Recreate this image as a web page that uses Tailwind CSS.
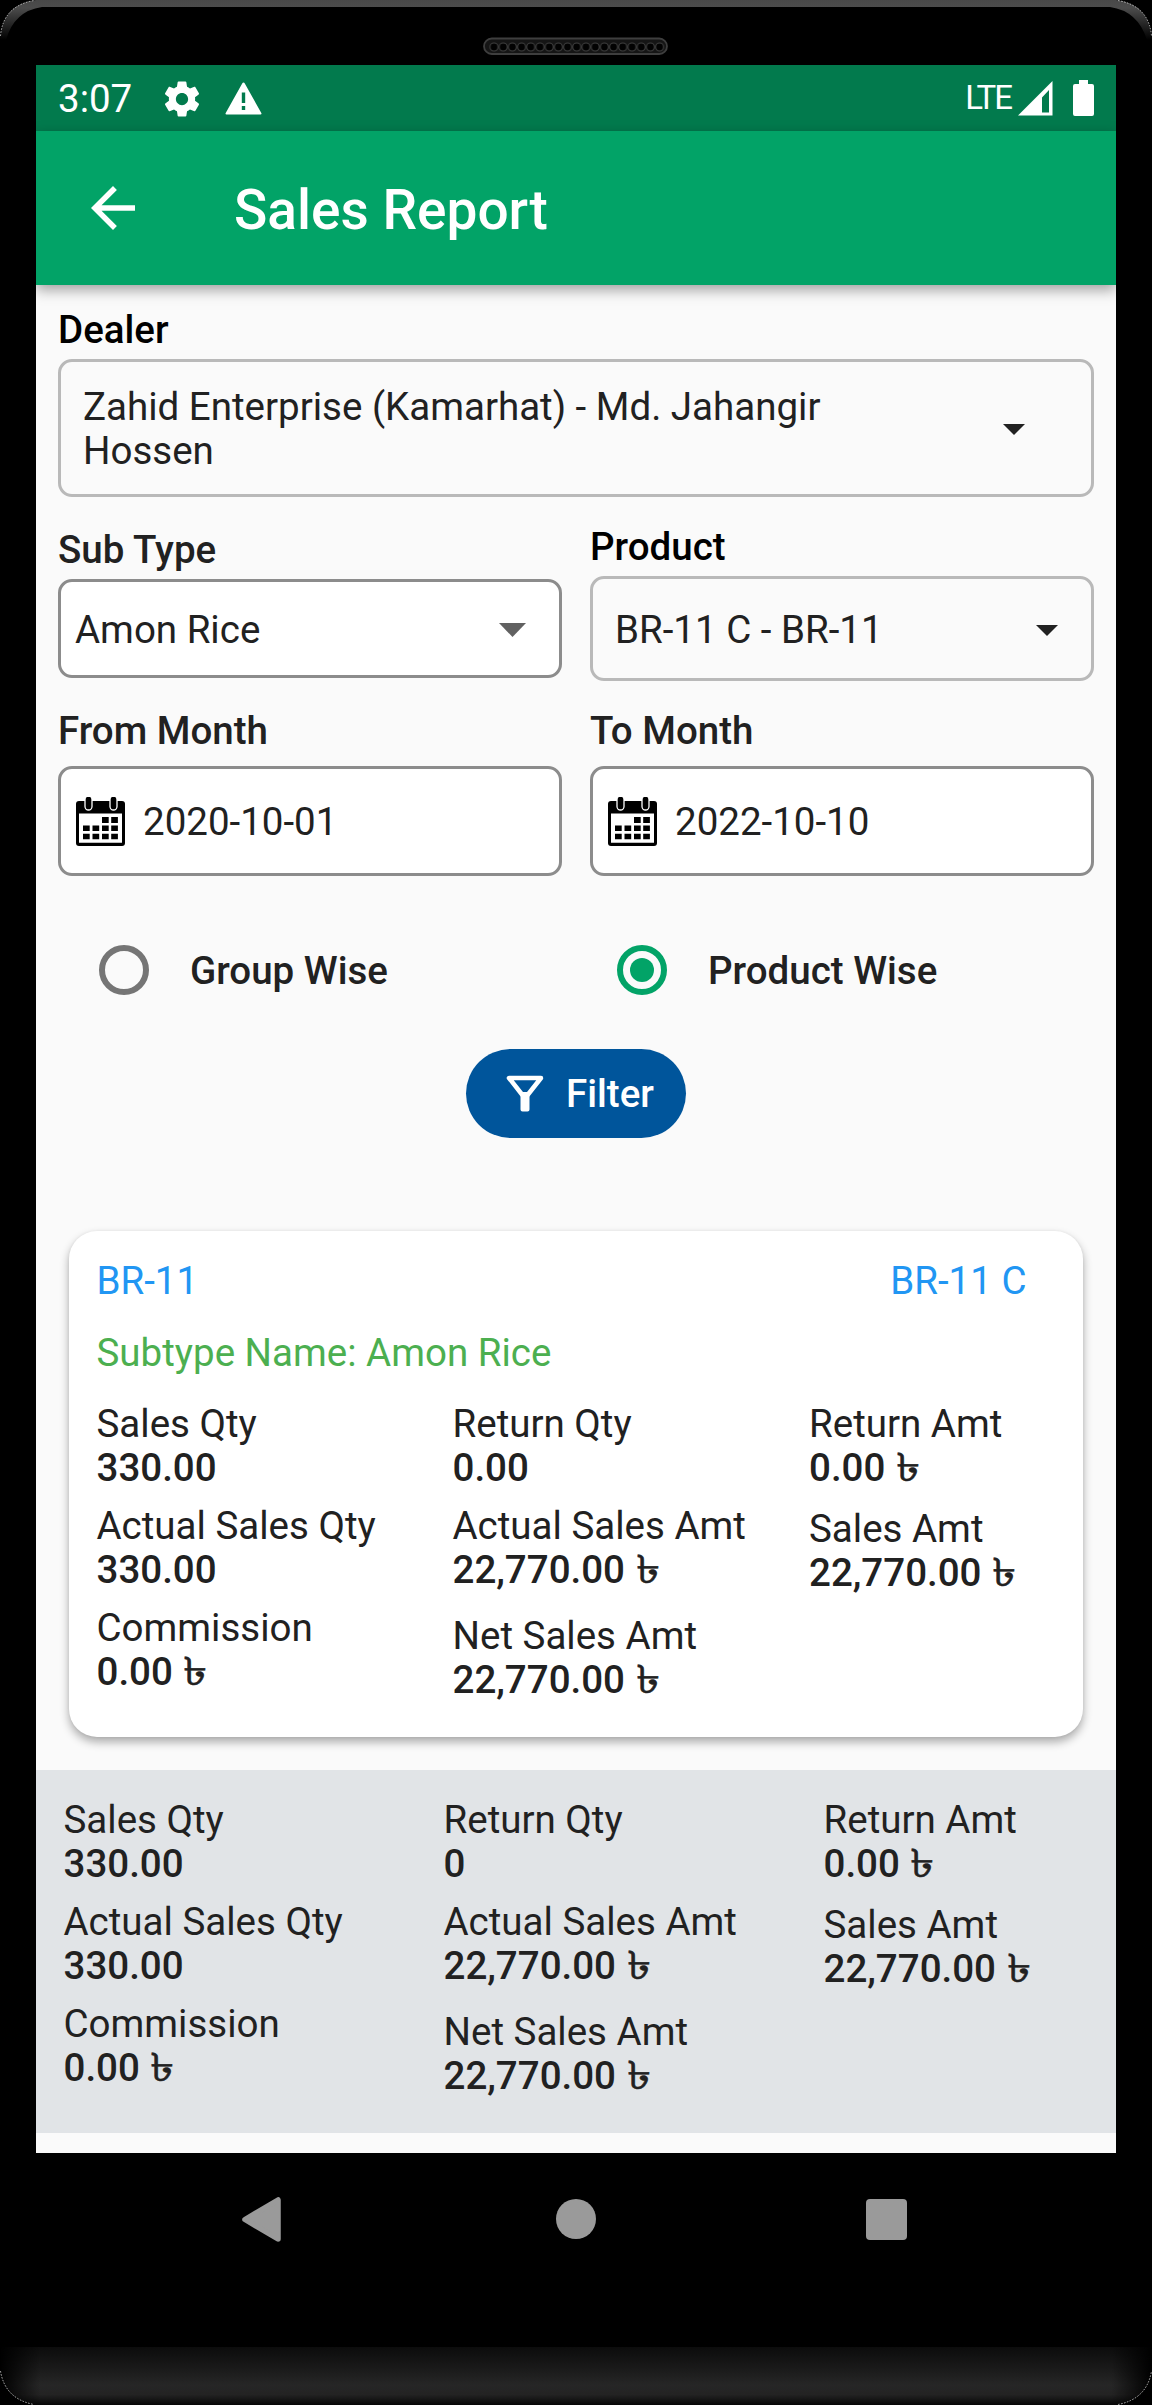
<!DOCTYPE html>
<html lang="en">
<head>
<meta charset="utf-8">
<title>Sales Report</title>
<script src="https://cdn.jsdelivr.net/npm/@tailwindcss/browser@4"></script>
</head>
<body class="bg-black">
<div class="relative flex h-[2405px] w-[1152px] flex-col overflow-hidden bg-black font-[Roboto,sans-serif] text-[38.5px] leading-[44px] text-[#212121]">

  <!-- device frame -->
  <svg class="absolute inset-0" width="1152" height="2405" viewBox="0 0 1152 2405" fill="none">
    <defs>
      <linearGradient id="topEdge" x1="0" y1="0" x2="0" y2="40" gradientUnits="userSpaceOnUse"><stop stop-color="#484848"/><stop offset=".2" stop-color="#4c4c4c"/><stop offset="1" stop-color="#000"/></linearGradient>
      <linearGradient id="bottomEdge" x1="0" y1="2347" x2="0" y2="2405" gradientUnits="userSpaceOnUse"><stop stop-color="#0c0c0c"/><stop offset=".35" stop-color="#191919"/><stop offset=".65" stop-color="#262626"/><stop offset=".82" stop-color="#232323"/><stop offset="1" stop-color="#060606"/></linearGradient>
      <linearGradient id="sideFade" x1="0" y1="0" x2="1152" y2="0" gradientUnits="userSpaceOnUse"><stop stop-color="#000"/><stop offset=".035" stop-color="#000" stop-opacity="0"/><stop offset=".965" stop-color="#000" stop-opacity="0"/><stop offset="1" stop-color="#000"/></linearGradient>
      <pattern id="holes" x="489.4" y="0" width="9.2" height="92" patternUnits="userSpaceOnUse"><circle cx="4.6" cy="47" r="4" fill="#020202" stroke="#3d3d3d" stroke-width="1.1"/></pattern>
    </defs>
    <path d="M0 40Q2 4 36 0H1116Q1150 4 1152 40H1147Q1138 11 1110 7H42Q14 11 6 40Z" fill="url(#topEdge)"/>
    <path d="M0 2347H1152V2371Q1147 2399 1118 2405H34Q5 2399 0 2371Z" fill="url(#bottomEdge)"/>
    <path d="M0 2347H1152V2371Q1147 2399 1118 2405H34Q5 2399 0 2371Z" fill="url(#sideFade)"/>
    <path d="M.5 36Q3 6 34 .5M1118 .5Q1149 6 1151.500 36M.5 2371Q5 2399 34 2404.500M1118 2404.500Q1147 2399 1151.500 2371" stroke="#ddd" stroke-width=".8" stroke-dasharray="1.500 1.500"/>
    <rect x="484" y="38.500" width="183" height="15.500" rx="7.750" fill="#151515" stroke="#3e3e3e" stroke-width="1.800"/>
    <rect x="489.400" y="40" width="174.800" height="13" fill="url(#holes)"/>
  </svg>

  <main class="relative mx-9 mt-[65px] flex h-[2088px] flex-col overflow-hidden bg-[#fafafa]">
    <!-- status bar -->
    <div class="relative z-10 flex h-[66px] shrink-0 items-center bg-[#027a4d] pl-[22px] pr-[22px] text-white">
      <span class="w-[102px] pt-0.5 text-[38.5px]">3:07</span>
      <svg class="ml-px mt-px h-[42px] w-[42px]" viewBox="0 0 24 24" fill="currentColor"><path d="M19.430 12.980c.04-.320.070-.640.070-.980s-.030-.660-.070-.980l2.110-1.650c.190-.150.240-.420.120-.640l-2-3.460c-.120-.220-.390-.300-.610-.220l-2.490 1c-.520-.400-1.080-.730-1.690-.980l-.380-2.650C14.460 2.180 14.250 2 14 2h-4c-.250 0-.460.180-.490.420l-.380 2.650c-.610.250-1.170.590-1.690.980l-2.490-1c-.230-.090-.490 0-.610.220l-2 3.460c-.130.220-.070.490.120.640l2.110 1.650c-.040.320-.070.650-.070.980s.030.660.070.980l-2.110 1.650c-.190.150-.240.420-.120.640l2 3.460c.120.220.390.300.610.220l2.490-1c.520.400 1.080.730 1.690.980l.380 2.650c.030.240.240.420.490.420h4c.250 0 .460-.180.490-.420l.380-2.650c.610-.250 1.170-.590 1.690-.980l2.490 1c.230.090.490 0 .610-.220l2-3.460c.120-.220.070-.490-.120-.640l-2.110-1.650zM12 15.500c-1.930 0-3.500-1.570-3.500-3.500s1.570-3.500 3.500-3.500 3.500 1.570 3.500 3.500-1.570 3.500-3.500 3.500z"/></svg>
      <svg class="ml-[22px] h-[33px] w-[37px]" viewBox="0 0 37 33" fill="currentColor"><path fill-rule="evenodd" d="M18.500.500Q19.300.500 19.800 1.400L36.300 31Q37 32.500 35.500 32.500H1.500Q0 32.500 .700 31L17.200 1.400Q17.700.500 18.500.500ZM16.800 10.500V21H20.200V10.500ZM16.800 24V28H20.200V24Z"/></svg>
      <span class="ml-auto text-[33px] tracking-[-2px]">LTE</span>
      <svg class="ml-[7px] mt-px h-[35px] w-[35px]" viewBox="0 0 35 35" fill="currentColor"><path fill-rule="evenodd" d="M34.500 0V34.500H0ZM31 9L24 16.500V31.500H31Z"/></svg>
      <svg class="ml-5 h-9 w-[21px]" viewBox="0 0 21 36" fill="currentColor"><path d="M6 0h9v4h4q2 0 2 2v28q0 2-2 2H2q-2 0-2-2V6q0-2 2-2h4z"/></svg>
    </div>

    <!-- app bar -->
    <header class="relative z-10 flex h-[154px] shrink-0 items-center bg-[#02a367] pl-[55px] text-white shadow-[0_5px_13px_rgba(0,0,0,0.36)]">
      <svg class="h-11 w-11" viewBox="4 4 16 16" fill="currentColor"><path d="M20 11H7.830l5.590-5.590L12 4l-8 8 8 8 1.410-1.410L7.830 13H20v-2z"/></svg>
      <h1 class="ml-[99px] mt-[3px] text-[55px] font-medium leading-[64px]">Sales Report</h1>
    </header>

    <!-- filters -->
    <section class="flex flex-col px-[22px] pt-[23px]">
      <label class="font-medium text-black">Dealer</label>
      <div class="mt-[7px] flex h-[138px] items-center rounded-[14px] border-3 border-[#b9b9b9] pl-[22px] pr-[66px]">
        <p class="w-[780px] pt-0.5">Zahid Enterprise (Kamarhat) - Md. Jahangir Hossen</p>
        <svg class="ml-auto mt-0.5 h-[11px] w-[22px]" viewBox="0 0 22 11"><path d="M0 0h22L11 11z" fill="#212121"/></svg>
      </div>

      <div class="mt-7 grid grid-cols-2 gap-7">
        <div class="flex flex-col pt-[3px]">
          <label class="font-medium">Sub Type</label>
          <div class="mt-[7px] flex h-[99px] items-center rounded-[14px] border-3 border-[#8c8c8c] bg-white pl-[14px] pr-[33px]">
            <span class="pt-0.5">Amon Rice</span>
            <svg class="ml-auto mt-[3px] h-[14px] w-[27px]" viewBox="0 0 27 14"><path d="M0 0h27L13.500 14z" fill="#616161"/></svg>
          </div>
        </div>
        <div class="flex flex-col">
          <label class="font-medium text-black">Product</label>
          <div class="mt-[7px] flex h-[105px] items-center rounded-[14px] border-3 border-[#b9b9b9] pl-[22px] pr-[33px]">
            <span class="pt-0.5">BR-11 C - BR-11</span>
            <svg class="ml-auto mt-[3px] h-[11px] w-[22px]" viewBox="0 0 22 11"><path d="M0 0h22L11 11z" fill="#212121"/></svg>
          </div>
        </div>
      </div>

      <div class="mt-7 grid grid-cols-2 gap-7">
        <div class="flex flex-col">
          <label class="font-medium">From Month</label>
          <div class="mt-[13px] flex h-[110px] items-center gap-[18px] rounded-[14px] border-3 border-[#8c8c8c] bg-white pl-[15px]">
            <svg class="mt-px h-[49px] w-[49px]" viewBox="0 0 49 49"><rect y="4" width="49" height="45" rx="3"/><path d="M3 16.500H46V45.800H3Z" fill="#fff"/><path d="M26 20h6.700v6H26zM35.200 20h6.700v6h-6.700zM7 28.500h6.700v5.500H7zM16.500 28.500h6.700v5.500h-6.700zM26 28.500h6.700v5.500H26zM35.200 28.500h6.700v5.500h-6.700zM7 36.700h6.700v5.500H7zM16.500 36.700h6.700v5.500h-6.700zM26 36.700h6.700v5.500H26zM35.200 36.700h6.700v5.500h-6.700z"/><g stroke="#fff" stroke-width="1.300"><rect x="9" y="-1" width="7" height="14" rx="3.500"/><rect x="34" y="-1" width="7" height="14" rx="3.500"/></g></svg>
            <span class="pt-0.5">2020-10-01</span>
          </div>
        </div>
        <div class="flex flex-col">
          <label class="font-medium">To Month</label>
          <div class="mt-[13px] flex h-[110px] items-center gap-[18px] rounded-[14px] border-3 border-[#8c8c8c] bg-white pl-[15px]">
            <svg class="mt-px h-[49px] w-[49px]" viewBox="0 0 49 49"><rect y="4" width="49" height="45" rx="3"/><path d="M3 16.500H46V45.800H3Z" fill="#fff"/><path d="M26 20h6.700v6H26zM35.200 20h6.700v6h-6.700zM7 28.500h6.700v5.500H7zM16.500 28.500h6.700v5.500h-6.700zM26 28.500h6.700v5.500H26zM35.200 28.500h6.700v5.500h-6.700zM7 36.700h6.700v5.500H7zM16.500 36.700h6.700v5.500h-6.700zM26 36.700h6.700v5.500H26zM35.200 36.700h6.700v5.500h-6.700z"/><g stroke="#fff" stroke-width="1.300"><rect x="9" y="-1" width="7" height="14" rx="3.500"/><rect x="34" y="-1" width="7" height="14" rx="3.500"/></g></svg>
            <span class="pt-0.5">2022-10-10</span>
          </div>
        </div>
      </div>

      <div class="mt-[69px] flex h-[50px] items-center pl-[41px] font-medium">
        <div class="flex w-[518px] items-center gap-[41px]">
          <span class="size-[50px] rounded-full border-6 border-[#757575]"></span>
          <span class="pt-px">Group Wise</span>
        </div>
        <div class="flex items-center gap-[41px]">
          <span class="flex size-[50px] items-center justify-center rounded-full border-6 border-[#02a367]"><span class="size-[24px] rounded-full bg-[#02a367]"></span></span>
          <span class="pt-px">Product Wise</span>
        </div>
      </div>

      <button class="mt-[54px] flex h-[89px] w-[220px] items-center gap-[22px] self-center rounded-full bg-[#00559b] pl-10 text-white">
        <svg class="h-[38px] w-[38px]" viewBox="0 0 38 38" fill="none" stroke="currentColor" stroke-linejoin="round"><path d="M3 3H35L22 19.500H16Z" stroke-width="4.500"/><path d="M16.500 19V34.500H21.500V19Z" fill="currentColor" stroke-width="4"/></svg>
        <span class="font-medium">Filter</span>
      </button>
    </section>

    <!-- result card -->
    <article class="mx-[33px] mt-[93px] flex h-[506px] shrink-0 flex-col rounded-[28px] bg-white px-[27.500px] pt-7 shadow-[0_5px_10px_rgba(0,0,0,0.32),0_0_3px_rgba(0,0,0,0.06)]">
      <div class="flex justify-between pr-[29px] text-[#2196f3]"><span>BR-11</span><span>BR-11 C</span></div>
      <p class="mt-7 text-[#4caf50]">Subtype Name: Amon Rice</p>
      <div class="mt-[27px] grid grid-cols-[356px_356.500px_auto]">
        <dl>
          <dt>Sales Qty</dt><dd class="mb-[14px] h-11 font-medium">330.00</dd>
          <dt>Actual Sales Qty</dt><dd class="mb-[14px] h-11 font-medium">330.00</dd>
          <dt>Commission</dt><dd class="h-11 font-medium">0.00 <span class="ml-px inline-block origin-left scale-x-125 [-webkit-text-stroke:0.5px_currentColor]">৳</span></dd>
        </dl>
        <dl>
          <dt>Return Qty</dt><dd class="mb-[14px] h-11 font-medium">0.00</dd>
          <dt>Actual Sales Amt</dt><dd class="mb-[22px] h-11 font-medium">22,770.00 <span class="ml-px inline-block origin-left scale-x-125 [-webkit-text-stroke:0.5px_currentColor]">৳</span></dd>
          <dt>Net Sales Amt</dt><dd class="h-11 font-medium">22,770.00 <span class="ml-px inline-block origin-left scale-x-125 [-webkit-text-stroke:0.5px_currentColor]">৳</span></dd>
        </dl>
        <dl>
          <dt>Return Amt</dt><dd class="mb-[17px] h-11 font-medium">0.00 <span class="ml-px inline-block origin-left scale-x-125 [-webkit-text-stroke:0.5px_currentColor]">৳</span></dd>
          <dt>Sales Amt</dt><dd class="h-11 font-medium">22,770.00 <span class="ml-px inline-block origin-left scale-x-125 [-webkit-text-stroke:0.5px_currentColor]">৳</span></dd>
        </dl>
      </div>
    </article>

    <!-- totals -->
    <footer class="mt-[33px] grid h-[363px] shrink-0 grid-cols-[380px_380px_auto] bg-[#e1e4e7] pl-[27.500px] pt-7">
      <dl>
        <dt>Sales Qty</dt><dd class="mb-[14px] h-11 font-medium">330.00</dd>
        <dt>Actual Sales Qty</dt><dd class="mb-[14px] h-11 font-medium">330.00</dd>
        <dt>Commission</dt><dd class="h-11 font-medium">0.00 <span class="ml-px inline-block origin-left scale-x-125 [-webkit-text-stroke:0.5px_currentColor]">৳</span></dd>
      </dl>
      <dl>
        <dt>Return Qty</dt><dd class="mb-[14px] h-11 font-medium">0</dd>
        <dt>Actual Sales Amt</dt><dd class="mb-[22px] h-11 font-medium">22,770.00 <span class="ml-px inline-block origin-left scale-x-125 [-webkit-text-stroke:0.5px_currentColor]">৳</span></dd>
        <dt>Net Sales Amt</dt><dd class="h-11 font-medium">22,770.00 <span class="ml-px inline-block origin-left scale-x-125 [-webkit-text-stroke:0.5px_currentColor]">৳</span></dd>
      </dl>
      <dl>
        <dt>Return Amt</dt><dd class="mb-[17px] h-11 font-medium">0.00 <span class="ml-px inline-block origin-left scale-x-125 [-webkit-text-stroke:0.5px_currentColor]">৳</span></dd>
        <dt>Sales Amt</dt><dd class="h-11 font-medium">22,770.00 <span class="ml-px inline-block origin-left scale-x-125 [-webkit-text-stroke:0.5px_currentColor]">৳</span></dd>
      </dl>
    </footer>
  </main>

  <!-- navigation keys -->
  <nav class="relative mt-11 flex h-[45px] items-center pl-[242px]">
    <svg class="h-[45px] w-[39px]" viewBox="0 0 39 45"><path d="M36 3V42L3 22.500Z" fill="#9a9a9a" stroke="#9a9a9a" stroke-width="5.500" stroke-linejoin="round"/></svg>
    <span class="-mt-px ml-[275px] size-10 rounded-full bg-[#9a9a9a]"></span>
    <span class="ml-[270px] size-[41px] rounded-[4px] bg-[#9a9a9a]"></span>
  </nav>
</div>
</body>
</html>
